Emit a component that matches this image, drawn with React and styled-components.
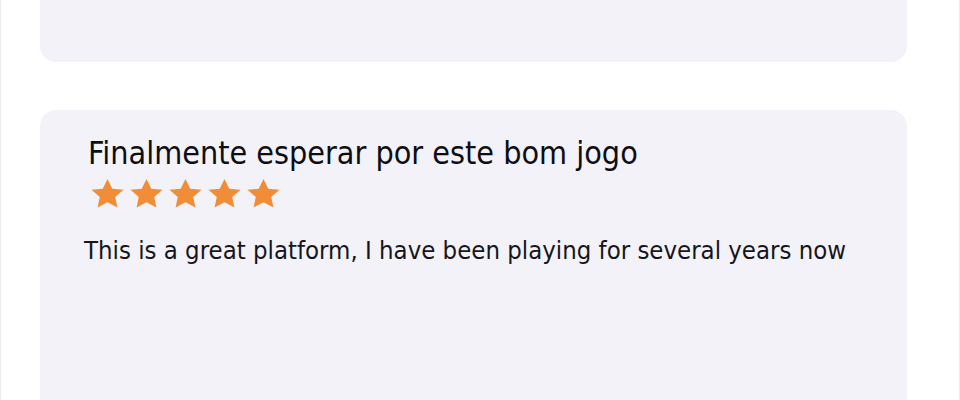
import React from "react";
import styled, { createGlobalStyle } from "styled-components";

const Global = createGlobalStyle`
  html, body { margin: 0; padding: 0; background: #ffffff; }
  body { font-family: "DejaVu Sans Condensed", "DejaVu Sans", sans-serif; }
`;

const Page = styled.div`
  width: 960px;
  height: 400px;
  overflow: hidden;
  box-sizing: border-box;
  border-left: 1px solid #ececf0;
  border-right: 1px solid #ececf0;
  padding: 0 52px 0 39px;
  display: flex;
  flex-direction: column;
  gap: 48px;
`;

const Card = styled.div`
  background: #f3f2f9;
  border-radius: 16px;
  box-sizing: border-box;
  height: ${(p) => p.$h}px;
  margin-top: ${(p) => p.$mt || 0}px;
  padding: 24px 44px 0 44px;
  flex-shrink: 0;
`;

const Title = styled.h3`
  margin: 0 0 0 4px;
  font-weight: 400;
  font-size: 32px;
  line-height: 38px;
  color: #0e0e12;
  letter-spacing: 0;
`;

const Stars = styled.div`
  display: flex;
  gap: 4px;
  margin: 6px 0 0 6px;
`;

const Body = styled.p`
  margin: 26px 0 0 0;
  font-size: 25.5px;
  line-height: 30px;
  color: #16161a;
`;

const Star = () => (
  <svg width="35" height="31" viewBox="0 0 24 23" preserveAspectRatio="none">
    <path
      d="M12 0.8l3.3 7.1 7.7 0.9-5.7 5.3 1.5 7.7L12 17.9l-6.8 3.9 1.5-7.7L1 8.8l7.7-0.9z"
      fill="#f28d37"
    />
  </svg>
);

export default function App() {
  return (
    <>
      <Global />
      <Page>
        <Card $h={110} $mt={-48} />
        <Card $h={320}>
          <Title>Finalmente esperar por este bom jogo</Title>
          <Stars>
            {[0, 1, 2, 3, 4].map((i) => (
              <Star key={i} />
            ))}
          </Stars>
          <Body>This is a great platform, I have been playing for several years now</Body>
        </Card>
      </Page>
    </>
  );
}
